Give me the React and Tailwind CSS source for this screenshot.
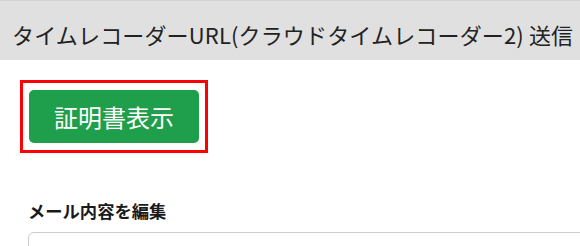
export default function App() {
    return (
        <div className="w-[580px] h-[246px] overflow-hidden bg-white" style={{ fontFamily: '"Noto Sans CJK JP", "Noto Sans", sans-serif' }}>
            {/* page header */}
            <div className="h-[60px] bg-[#e0e0e0] border-t border-[#d2d2d2] flex items-center px-3 whitespace-nowrap overflow-hidden">
                <h1 className="text-[22px] tracking-[0.15px] text-[#222] font-normal leading-none pt-[6px]">タイムレコーダーURL(クラウドタイムレコーダー2) 送信</h1>
            </div>

            <div className="px-5 pt-5">
                {/* highlighted button */}
                <div className="w-[188px] h-[73px] border-[3px] border-[#ff0000] flex items-center justify-center">
                    <button className="w-[170px] h-[53px] rounded-[5px] bg-[#1f9e4b] text-white text-[24px] leading-none">
                        証明書表示
                    </button>
                </div>

                <div className="pl-2 mt-[46px]">
                    <label className="block text-[17.3px] font-bold text-[#1a1a1a] leading-[24px]">メール内容を編集</label>
                    <div className="mt-[9px] h-[40px] w-[600px] border border-[#cccccc] rounded-[6px]"></div>
                </div>
            </div>
        </div>
    )
}
